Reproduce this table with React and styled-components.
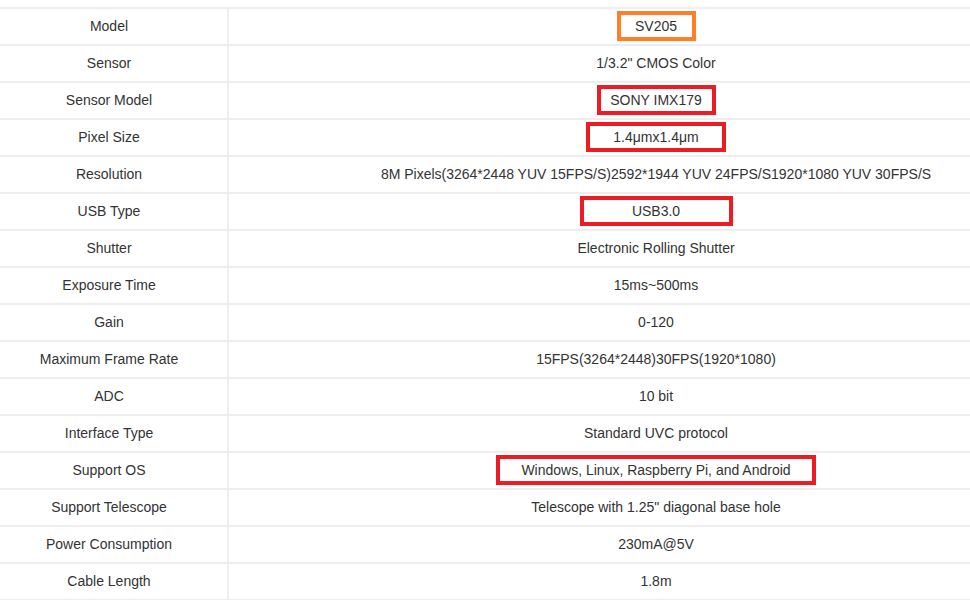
import React from 'react';
import styled, { createGlobalStyle } from 'styled-components';

const GlobalStyle = createGlobalStyle`
    html, body {
        margin: 0;
        padding: 0;
        background: #FFFFFF;
        overflow: hidden;
    }
    body {
        font-family: "Liberation Sans", Arial, sans-serif;
    }
`

const SpecTable = styled.div`
    width: 970px;
    margin-top: 7px;
    border-top: 2px solid #EEEEEE;
`

const Row = styled.div`
    display: grid;
    grid-template-columns: 229px 1fr;
    height: 35px;
    border-bottom: 2px solid #EEEEEE;
`

const Label = styled.div`
    display: flex;
    align-items: center;
    justify-content: center;
    padding: 0 9px 2px 0;
    border-right: 2px solid #EEEEEE;
    font-size: 14px;
    color: #333333;
`

// the value column runs past the right edge in the source, so its centre sits at x=657
const Value = styled.div`
    display: flex;
    align-items: center;
    justify-content: center;
    padding: 0 0 2px 113px;
    font-size: 14px;
    color: #333333;
    white-space: nowrap;
`

const Mark = styled.span`
    display: inline-flex;
    align-items: center;
    justify-content: center;
    box-sizing: border-box;
    width: ${({ w }) => w}px;
    height: 30px;
    border: 4px solid ${({ orange }) => orange ? '#FF7F27' : '#ED1C24'};
`

const specs = [
    { label: 'Model', value: 'SV205', mark: 79, orange: true },
    { label: 'Sensor', value: '1/3.2" CMOS Color' },
    { label: 'Sensor Model', value: 'SONY IMX179', mark: 119 },
    { label: 'Pixel Size', value: '1.4μmx1.4μm', mark: 140 },
    { label: 'Resolution', value: '8M Pixels(3264*2448 YUV 15FPS/S)2592*1944 YUV 24FPS/S1920*1080 YUV 30FPS/S' },
    { label: 'USB Type', value: 'USB3.0', mark: 153 },
    { label: 'Shutter', value: 'Electronic Rolling Shutter' },
    { label: 'Exposure Time', value: '15ms~500ms' },
    { label: 'Gain', value: '0-120' },
    { label: 'Maximum Frame Rate', value: '15FPS(3264*2448)30FPS(1920*1080)' },
    { label: 'ADC', value: '10 bit' },
    { label: 'Interface Type', value: 'Standard UVC protocol' },
    { label: 'Support OS', value: 'Windows, Linux, Raspberry Pi, and Android', mark: 320 },
    { label: 'Support Telescope', value: 'Telescope with 1.25" diagonal base hole' },
    { label: 'Power Consumption', value: '230mA@5V' },
    { label: 'Cable Length', value: '1.8m' },
]

export default function App() {
    return (
        <>
            <GlobalStyle />
            <SpecTable>
                {specs.map((el) => (
                    <Row key={el.label}>
                        <Label>{el.label}</Label>
                        <Value>
                            {el.mark ? <Mark w={el.mark} orange={el.orange}>{el.value}</Mark> : el.value}
                        </Value>
                    </Row>
                ))}
            </SpecTable>
        </>
    )
}
